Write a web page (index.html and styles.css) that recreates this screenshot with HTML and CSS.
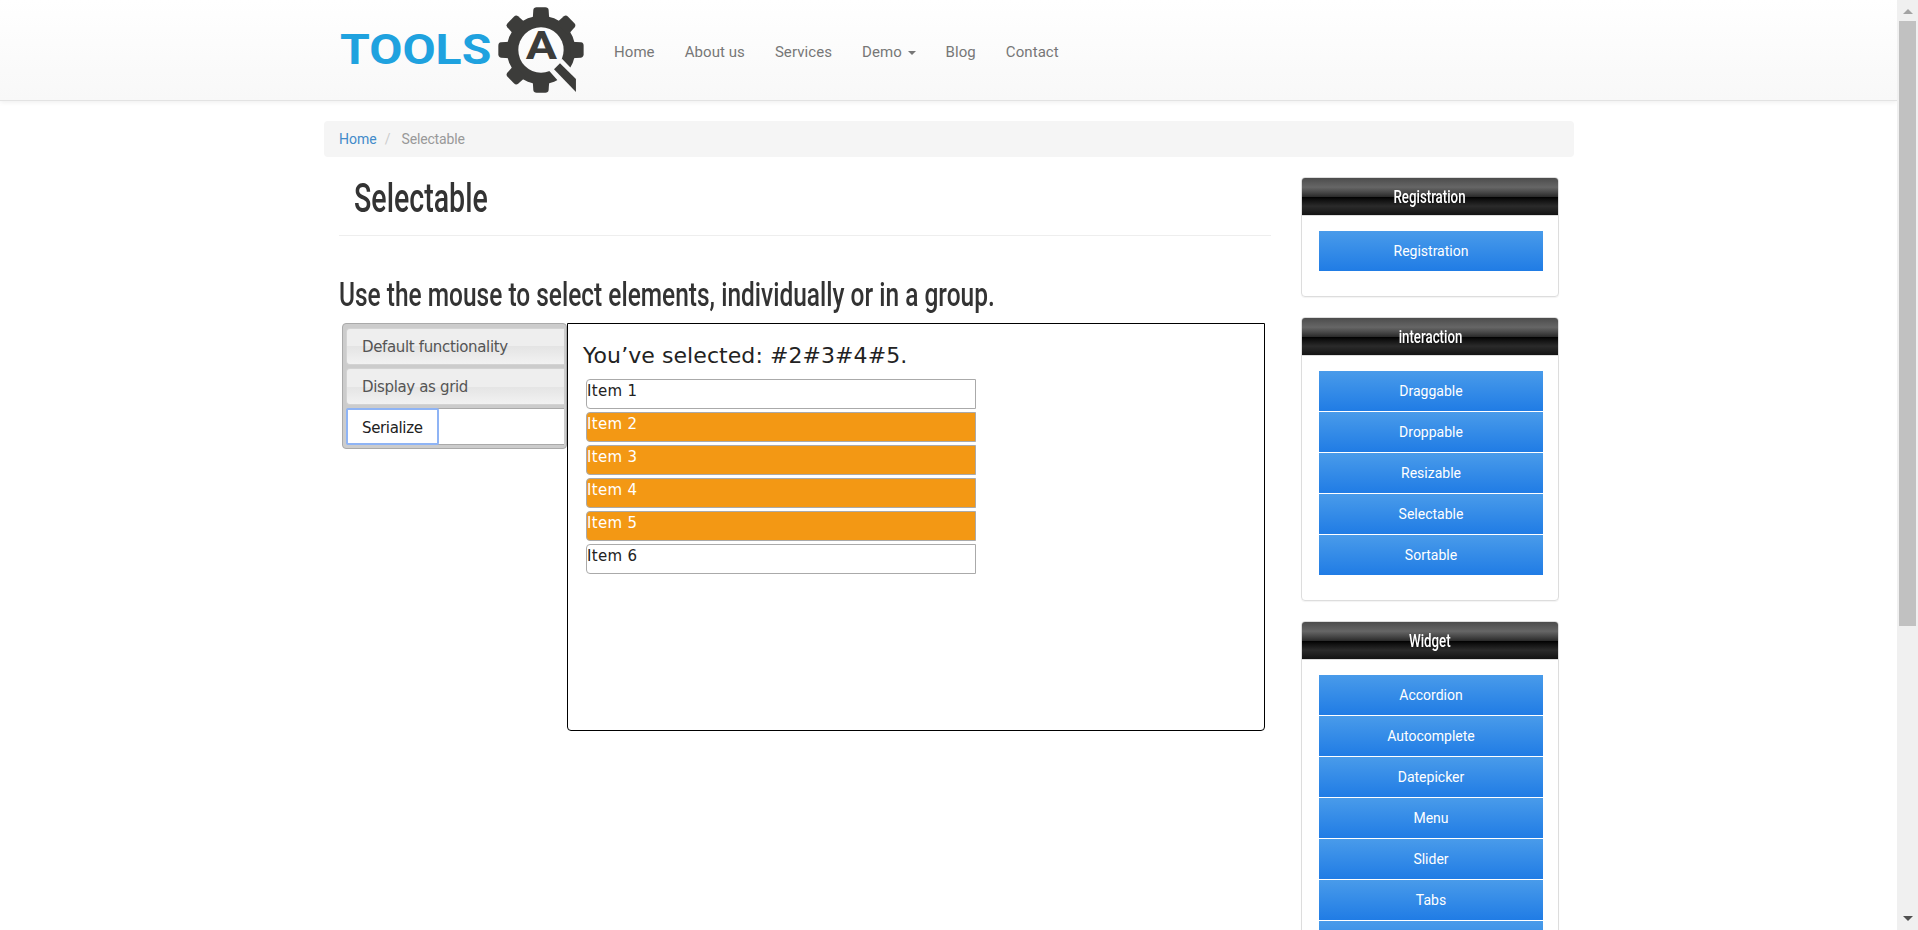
FILE: index.html
```
<!DOCTYPE html>
<html lang="en">
<head>
<meta charset="utf-8">
<title>Selectable</title>
<link rel="stylesheet" href="styles.css">
</head>
<body>
<div class="page">
  <header class="navbar">
    <a class="brand">
      <svg class="logo" viewBox="60 15 740 265">
        <defs>
          <mask id="cut">
            <rect x="500" width="340" height="300" fill="#fff"/>
            <circle cx="663" cy="150" r="68" fill="#000"/>
            <path d="M686 211 712 240 790 320 830 260 752 203 726 176z" fill="#000"/>
          </mask>
        </defs>
        <text class="logo-text" x="60" y="191" textLength="454" lengthAdjust="spacingAndGlyphs">TOOLS</text>
        <g fill="#3c3c3a">
          <g mask="url(#cut)">
            <circle cx="663" cy="150" r="103"/>
            <g id="teeth">
              <path id="tooth" d="M638 60 640 30Q641 22 650 22H676Q685 22 686 30L688 60z"/>
              <use href="#tooth" transform="rotate(45 663 150)"/>
              <use href="#tooth" transform="rotate(90 663 150)"/>
              <use href="#tooth" transform="rotate(180 663 150)"/>
              <use href="#tooth" transform="rotate(225 663 150)"/>
              <use href="#tooth" transform="rotate(270 663 150)"/>
              <use href="#tooth" transform="rotate(315 663 150)"/>
            </g>
          </g>
          <path d="M720 190 768 237V276L702 208z"/>
          <text class="logo-mark" x="617" y="177" textLength="94" lengthAdjust="spacingAndGlyphs">A</text>
        </g>
      </svg>
    </a>
    <nav class="menu">
      <a>Home</a><a>About us</a><a>Services</a><a>Demo <i class="caret"></i></a><a>Blog</a><a>Contact</a>
    </nav>
  </header>

  <div class="container">
    <div class="breadcrumb"><a>Home</a><span class="sep">/</span><span class="here">Selectable</span></div>
    <div class="columns">
      <main class="main">
        <h1><span class="narrow">Selectable</span></h1>
        <h2><span class="narrow">Use the mouse to select elements, individually or in a group.</span></h2>
        <div class="tabs">
          <ul class="tab-nav">
            <li><a>Default functionality</a></li>
            <li><a>Display as grid</a></li>
            <li class="active"><a>Serialize</a></li>
          </ul>
          <section class="tab-panel">
            <p class="feedback">You’ve selected: #2#3#4#5.</p>
            <ol class="items">
              <li>Item 1</li>
              <li class="selected">Item 2</li>
              <li class="selected">Item 3</li>
              <li class="selected">Item 4</li>
              <li class="selected">Item 5</li>
              <li>Item 6</li>
            </ol>
          </section>
        </div>
      </main>
      <aside class="sidebar">
        <section class="panel">
          <h3><span class="narrow">Registration</span></h3>
          <div class="links"><a>Registration</a></div>
        </section>
        <section class="panel">
          <h3><span class="narrow">interaction</span></h3>
          <div class="links"><a>Draggable</a><a>Droppable</a><a>Resizable</a><a>Selectable</a><a>Sortable</a></div>
        </section>
        <section class="panel">
          <h3><span class="narrow">Widget</span></h3>
          <div class="links"><a>Accordion</a><a>Autocomplete</a><a>Datepicker</a><a>Menu</a><a>Slider</a><a>Tabs</a><a></a></div>
        </section>
      </aside>
    </div>
  </div>
</div>
<div class="scrollbar"><i class="up"></i><i class="thumb"></i><i class="down"></i></div>
</body>
</html>
```
FILE: styles.css
```
* { box-sizing: border-box; }
body {
  margin: 0;
  height: 930px;
  overflow: hidden;
  display: flex;
  background: #fff;
  color: #333;
  font: 14px/20px Roboto, sans-serif;
}
.page { width: 1897px; height: 930px; overflow: hidden; }
h1, h2, h3, p, ul, ol { margin: 0; padding: 0; list-style: none; }
.narrow { display: inline-block; white-space: nowrap; }

/* top bar */
.navbar {
  height: 101px;
  padding-left: 340px;
  display: flex;
  align-items: flex-start;
  border-bottom: 1px solid #e3e3e3;
  background: linear-gradient(#fff, #f8f8f8);
  box-shadow: 0 1px 5px rgba(0, 0, 0, .075);
}
.brand { padding-top: 5px; width: 259px; }
.logo { display: block; width: 246.7px; height: 88.3px; }
.logo-text { font: 700 129px Roboto, sans-serif; fill: #1fa2df; }
.logo-mark { font: 700 115px Roboto, sans-serif; }
.menu { display: flex; padding-top: 42px; color: #777; font-size: 15px; letter-spacing: .07px; }
.menu a { padding: 0 15px; }
.caret {
  display: inline-block;
  margin-left: 2px;
  vertical-align: middle;
  border: 4px solid transparent;
  border-top-color: #777;
  border-bottom: 0;
}

.container { width: 1250px; margin: 20px 0 0 324px; }
.breadcrumb {
  height: 36px;
  padding: 8px 15px;
  display: flex;
  border-radius: 4px;
  background: #f5f5f5;
  color: #428bca;
}
.sep { padding: 0 11px 0 8px; color: #ccc; }
.here { color: #999; letter-spacing: -.15px; }
.columns { display: flex; padding: 20px 15px 0; }
.main { width: 932px; margin-right: 30px; }

h1 {
  height: 59px;
  padding: 0 0 0 15px;
  border-bottom: 1px solid #eee;
  font-size: 40px;
  line-height: 44px;
  font-weight: 500;
}
h1 .narrow { transform: scaleX(.715); transform-origin: 0 50%; }
h2 {
  height: 87px;
  padding-top: 38px;
  font-size: 34px;
  line-height: 40px;
  font-weight: 500;
}
h2 .narrow { transform: scaleX(.72); transform-origin: 0 50%; }

/* vertical tabs */
.tabs {
  display: flex;
  align-items: flex-start;
  padding-left: 3px;
  color: #222;
  font: 15px/20px "DejaVu Sans", Verdana, sans-serif;
}
.tab-nav {
  width: 225px;
  height: 126px;
  padding: 4px 2px 0 3px;
  border: 1px solid #aaa;
  border-radius: 4px;
  background: #ccc;
}
.tab-nav li {
  height: 37px;
  margin-bottom: 3px;
  border: 1px solid #d3d3d3;
  border-right: 0;
  border-radius: 4px 0 0 4px;
  background: linear-gradient(#eee 0 50%, #e4e4e4 50%, #f2f2f2);
}
.tab-nav a { display: inline-block; padding: 8px 15px; letter-spacing: -.35px; color: #555; }
.tab-nav .active { border-color: #aaa; background: #fff; }
.tab-nav .active a {
  height: 37px;
  margin: -1px;
  padding: 8px 14px;
  border: 2px solid #8fb4f5;
  border-radius: 2px;
  color: #212121;
}
.tab-panel {
  width: 698px;
  height: 408px;
  padding: 18px 15px;
  border: 1px solid #000;
  border-radius: 0 0 4px 4px;
}
.feedback { height: 34px; font-size: 22px; line-height: 28px; letter-spacing: .07px; }
.items { padding: 3px 3px 0; }
.items li {
  width: 390px;
  height: 30px;
  margin-bottom: 3px;
  border: 1px solid #aaa;
  border-radius: 4px 0 0 4px;
  line-height: 22px;
  letter-spacing: .3px;
}
.items .selected { background: #f39814; color: #fff; }

/* side panels */
.sidebar { width: 258px; }
.panel {
  margin-bottom: 20px;
  border: 1px solid #ddd;
  border-radius: 4px;
  box-shadow: 0 1px 1px rgba(0, 0, 0, .05);
  overflow: hidden;
}
h3 {
  height: 38px;
  border-bottom: 1px solid #ddd;
  background: linear-gradient(#4c4c4c 0%, #595959 12%, #666 25%, #474747 39%, #2c2c2c 50%, #000 51%, #111 60%, #2b2b2b 76%, #1c1c1c 91%, #131313 100%);
  color: #fff;
  font-size: 19px;
  line-height: 37px;
  font-weight: 500;
  text-align: center;
}
h3 .narrow { transform: scaleX(.7); }
.links { padding: 15px 15px 25px 17px; display: grid; gap: 1px; }
.links a {
  height: 40px;
  background: linear-gradient(#499bea, #207ce5);
  color: #fff;
  line-height: 41px;
  text-align: center;
}

/* window scrollbar */
.scrollbar {
  width: 21px;
  height: 930px;
  display: flex;
  flex-direction: column;
  align-items: center;
  background: #f0f0f0;
}
.up { margin-top: 9px; border: 5px solid transparent; border-bottom-color: #a3a3a3; border-top: 0; }
.thumb { width: 17px; height: 605px; margin-top: 7px; background: #c1c1c1; }
.down { margin: auto 0 9px; border: 5px solid transparent; border-top-color: #505050; border-bottom: 0; }
```
